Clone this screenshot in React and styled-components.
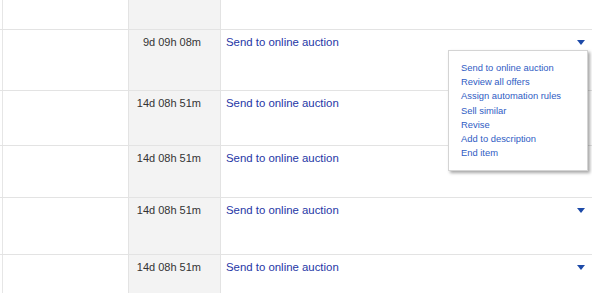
import React from 'react';
import styled, { createGlobalStyle } from 'styled-components';

const GlobalStyle = createGlobalStyle`
  body {
    margin: 0;
    background: #fff;
    font-family: 'Liberation Sans', Arial, sans-serif;
  }
`;

const rows = [
  { height: 30, time: '', link: false },
  { height: 61, time: '9d 09h 08m', link: true, menu: true },
  { height: 55, time: '14d 08h 51m', link: true },
  { height: 52, time: '14d 08h 51m', link: true },
  { height: 57, time: '14d 08h 51m', link: true },
  { height: 40, time: '14d 08h 51m', link: true },
];

const menuItems = [
  'Send to online auction',
  'Review all offers',
  'Assign automation rules',
  'Sell similar',
  'Revise',
  'Add to description',
  'End item',
];

function App() {
  return (
    <>
      <GlobalStyle />
      <Table>
        {rows.map((row, i) => (
          <Row key={i} $height={row.height}>
            <Edge />
            <Blank />
            <TimeCell>{row.time}</TimeCell>
            <ActionCell>
              {row.link && (
                <>
                  <ActionLink href="#">Send to online auction</ActionLink>
                  <Caret />
                </>
              )}
              {row.menu && (
                <Menu>
                  {menuItems.map((item) => (
                    <MenuItem key={item} href="#">
                      {item}
                    </MenuItem>
                  ))}
                </Menu>
              )}
            </ActionCell>
          </Row>
        ))}
      </Table>
    </>
  );
}

const Table = styled.div`
  width: 592px;
  height: 293px;
  overflow: hidden;
`;

const Row = styled.div`
  display: grid;
  grid-template-columns: 3px 126px 92px 371px;
  height: ${(p) => p.$height}px;
  box-sizing: border-box;
  border-bottom: 1px solid #e3e3e3;
`;

const Edge = styled.div`
  border-right: 1px solid #e6e6e6;
`;

const Blank = styled.div`
  border-right: 1px solid #e3e3e3;
`;

const TimeCell = styled.div`
  background: #f3f3f3;
  border-right: 1px solid #e3e3e3;
  padding: 5px 19px 0 0;
  text-align: right;
  font-size: 11px;
  line-height: 14px;
  color: #333;
`;

const ActionCell = styled.div`
  position: relative;
  display: flex;
  justify-content: space-between;
  align-items: flex-start;
  padding: 5px 7px 0 5px;
`;

const ActionLink = styled.a`
  font-size: 11.4px;
  line-height: 14px;
  color: #2536a6;
  text-decoration: none;
`;

const Caret = styled.span`
  width: 0;
  height: 0;
  margin-top: 5px;
  border-left: 4.5px solid transparent;
  border-right: 4.5px solid transparent;
  border-top: 5px solid #1d4aa8;
`;

const Menu = styled.div`
  position: absolute;
  top: 20px;
  right: 4px;
  z-index: 2;
  width: 140px;
  height: 121px;
  box-sizing: border-box;
  display: flex;
  flex-direction: column;
  padding: 10px 0 0 12px;
  background: #fff;
  border: 1px solid #d4d4d4;
  box-shadow: 2px 2px 3px rgba(0, 0, 0, 0.35);
`;

const MenuItem = styled.a`
  font-size: 9.4px;
  line-height: 14.2px;
  color: #2f5cc4;
  text-decoration: none;
  white-space: nowrap;
`;

export default App;
